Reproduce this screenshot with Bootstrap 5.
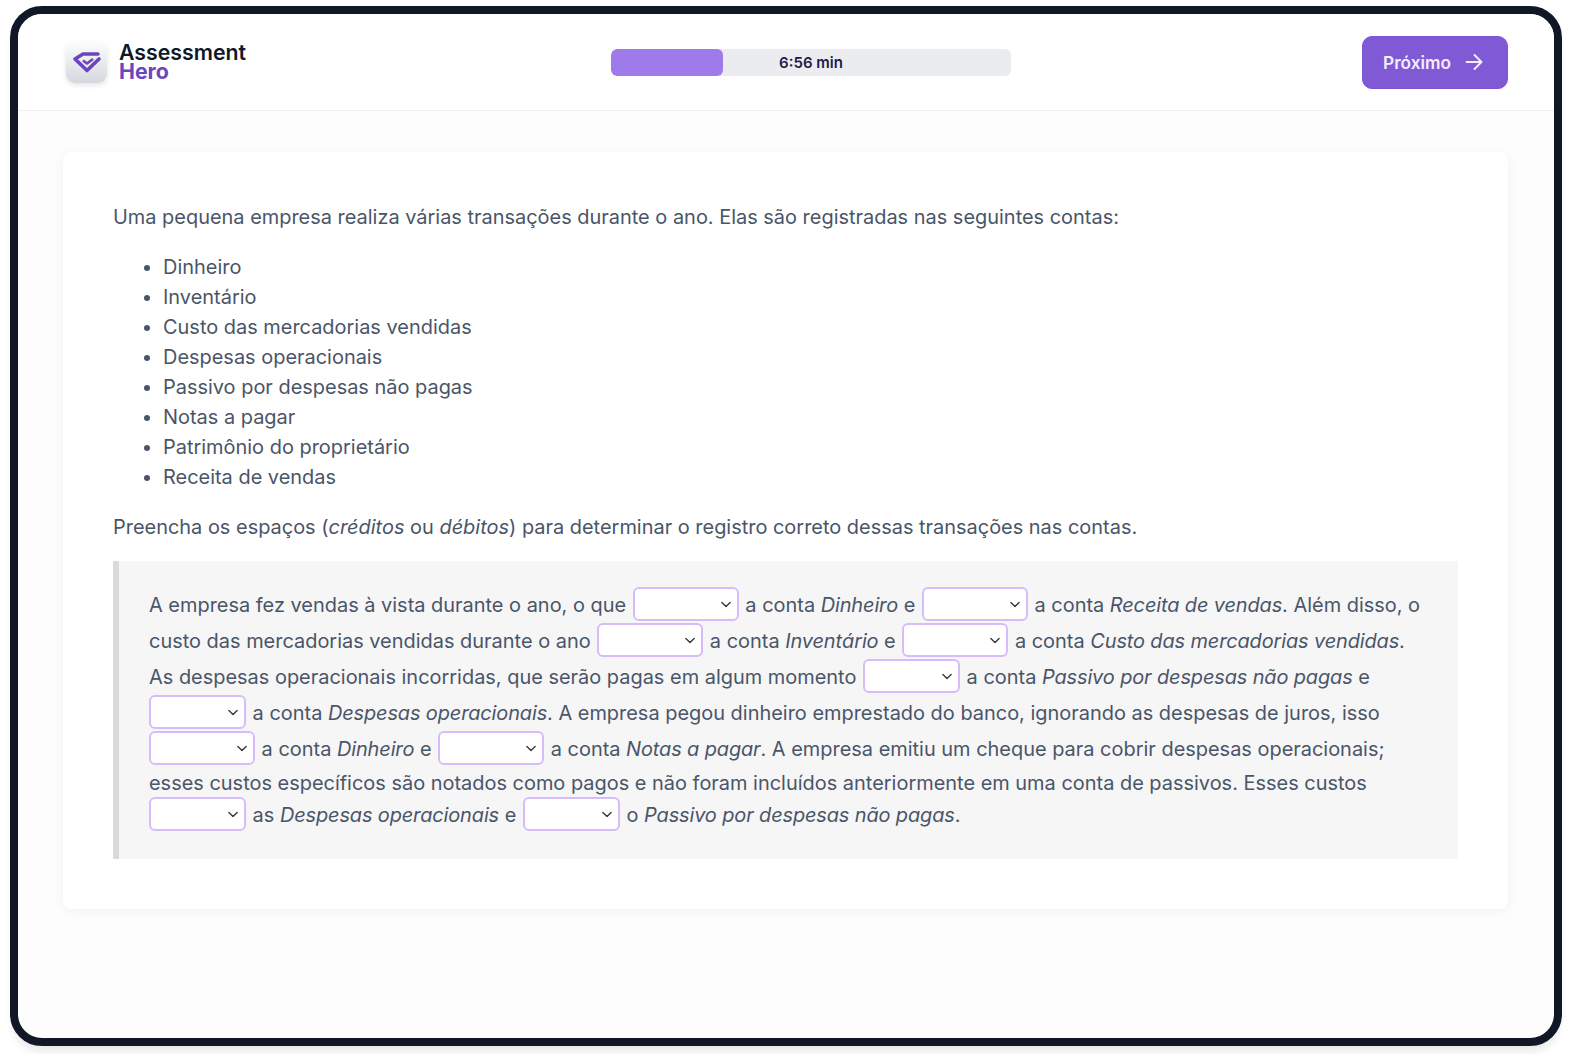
<!DOCTYPE html>
<html lang="pt">
<head>
  <meta charset="UTF-8" />
  <title>Assessment Hero</title>
  <meta name="viewport" content="width=device-width, initial-scale=1" />
  <link href="https://cdn.jsdelivr.net/npm/bootstrap@5.3.0/dist/css/bootstrap.min.css" rel="stylesheet" />
  <style>
    html, body { height: 100%; }
    body { background: #fff; font-family: Inter, "Liberation Sans", sans-serif; overflow: hidden; }
    .frame { margin: 6px 7px 0 10px; height: 1040px; border: 8px solid #101828; border-radius: 32px; overflow: hidden; background: #fdfdfe; box-shadow: 0 8px 10px -3px rgba(16, 24, 40, .1); }
    .top-bar { height: 97px; padding: 0 46px 0 45px; background: #fff; border-bottom: 1px solid #eceef1; }
    .brand { width: 197px; }
    .brand-icon { width: 41px; height: 41px; border-radius: 9px; background: linear-gradient(180deg, #fdfdfe, #d4d8dd); box-shadow: 0 2px 5px rgba(16, 24, 40, .12); margin-left: 3px; }
    .brand-name { font-size: 21.300px; font-weight: 600; line-height: 19px; color: #101828; margin-left: 12px; padding-bottom: 1px; }
    .brand-name span { display: block; color: #6b46c1; font-weight: 700; }
    .timer { width: 400px; height: 27px; border-radius: 6px; background: #ebecf0; overflow: hidden; }
    .timer-fill { background: #9f7aea; border-radius: 6px; }
    .timer-text { font-size: 15px; font-weight: 600; color: #1e1b4b; padding-top: 2px; }
    .next-btn { width: 146px; height: 53px; padding: 0 3px 0 0; gap: 9px; background: #805ad5; border: 1px solid #7c55d3; border-radius: 10px; color: #f5ecff; font-size: 17.200px; font-weight: 600; }
    .next-btn:hover { background: #805ad5; color: #f5ecff; }
    .next-label { padding-top: 2px; }
    .sheet { margin: 41px 46px 0 45px; padding: 50px; background: #fff; border-radius: 8px; box-shadow: 0 2px 12px rgba(16, 24, 40, .05); font-size: 19.940px; line-height: 30px; color: #4a5568; }
    .sheet p { margin-bottom: 20px; }
    .sheet ul { margin-bottom: 20px; padding-left: 50px; }
    .fill-box { margin-top: -1px; padding: 27px 30px 25px; background: #f6f6f7; border-left: 6px solid #d9dadc; }
    .fill-box em { letter-spacing: -.12px; }
    .gap-select { display: inline-block; height: 34px; padding: 0; margin: -1px 1px 3px; vertical-align: 2px; border: 2px solid #d6bcfa; border-radius: 6px; background-color: #fff; background-position: right 4px center; background-size: 14px 11px; box-shadow: none; }
    .line-start { margin-left: 0; }
    .wide-gap { width: 106px; }
    .short-gap { width: 97px; }
  </style>
</head>
<body>
  <div class="frame">
    <header class="top-bar d-flex align-items-center justify-content-between">
      <div class="brand d-flex align-items-center">
        <div class="brand-icon d-flex align-items-center justify-content-center">
          <svg width="30" height="22" viewBox="0 0 30 22" fill="none">
            <path d="M26 3H11L3 8 15 19.500 27 8" stroke="#6b46c1" stroke-width="3.600" stroke-linejoin="round" stroke-linecap="round"/>
            <path d="M11 9.500 15 12.500 21 8" stroke="#6b46c1" stroke-width="2.600" stroke-linejoin="round"/>
          </svg>
        </div>
        <div class="brand-name">Assessment<span>Hero</span></div>
      </div>
      <div class="timer progress position-relative">
        <div class="timer-fill progress-bar" style="width: 28%"></div>
        <div class="timer-text position-absolute top-50 start-50 translate-middle text-nowrap">6:56 min</div>
      </div>
      <button class="next-btn btn d-flex align-items-center justify-content-center">
        <span class="next-label">Próximo</span>
        <svg class="ms-1" width="20" height="20" viewBox="0 0 20 20" fill="none" stroke="currentColor" stroke-width="1.900" stroke-linecap="round" stroke-linejoin="round">
          <path d="M2.500 10H17.500M10.500 3 17.500 10 10.500 17"/>
        </svg>
      </button>
    </header>

    <main class="sheet">
      <p>Uma pequena empresa realiza várias transações durante o ano. Elas são registradas nas seguintes contas:</p>
      <ul>
        <li>Dinheiro</li>
        <li>Inventário</li>
        <li>Custo das mercadorias vendidas</li>
        <li>Despesas operacionais</li>
        <li>Passivo por despesas não pagas</li>
        <li>Notas a pagar</li>
        <li>Patrimônio do proprietário</li>
        <li>Receita de vendas</li>
      </ul>
      <p>Preencha os espaços (<em>créditos</em> ou <em>débitos</em>) para determinar o registro correto dessas transações nas contas.</p>
      <div class="fill-box">
        A empresa fez vendas à vista durante o ano, o que
        <select class="form-select gap-select wide-gap"></select>
        a conta <em>Dinheiro</em> e
        <select class="form-select gap-select wide-gap"></select>
        a conta <em>Receita de vendas</em>. Além disso, o custo das mercadorias vendidas durante o ano
        <select class="form-select gap-select wide-gap"></select>
        a conta <em>Inventário</em> e
        <select class="form-select gap-select wide-gap"></select>
        a conta <em>Custo das mercadorias vendidas</em>. As despesas operacionais incorridas, que serão pagas em algum momento
        <select class="form-select gap-select short-gap"></select>
        a conta <em>Passivo por despesas não pagas</em> e
        <select class="form-select gap-select short-gap line-start"></select>
        a conta <em>Despesas operacionais</em>. A empresa pegou dinheiro emprestado do banco, ignorando as despesas de juros, isso
        <select class="form-select gap-select wide-gap line-start"></select>
        a conta <em>Dinheiro</em> e
        <select class="form-select gap-select wide-gap"></select>
        a conta <em>Notas a pagar</em>. A empresa emitiu um cheque para cobrir despesas operacionais; esses custos específicos são notados como pagos e não foram incluídos anteriormente em uma conta de passivos. Esses custos
        <select class="form-select gap-select short-gap line-start"></select>
        as <em>Despesas operacionais</em> e
        <select class="form-select gap-select short-gap"></select>
        o <em>Passivo por despesas não pagas</em>.
      </div>
    </main>
  </div>
  <script src="https://cdn.jsdelivr.net/npm/bootstrap@5.3.0/dist/js/bootstrap.bundle.min.js"></script>
</body>
</html>
